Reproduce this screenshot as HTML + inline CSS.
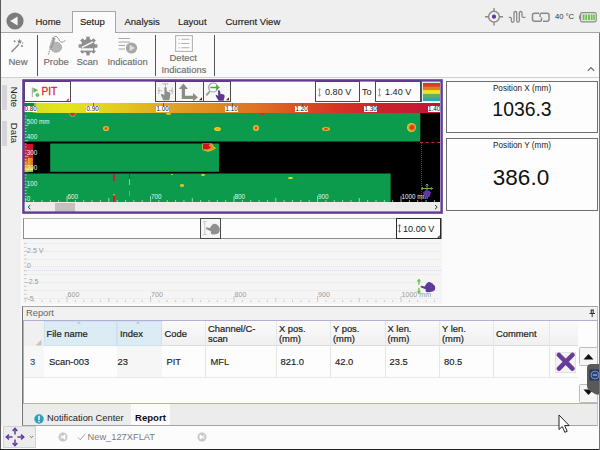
<!DOCTYPE html>
<html>
<head>
<meta charset="utf-8">
<title>Scan Setup</title>
<style>
html,body{margin:0;padding:0;}
body{width:600px;height:450px;position:relative;overflow:hidden;background:#fbfbfb;font-family:"Liberation Sans",sans-serif;font-size:9.5px;color:#222;}
.a{position:absolute;}
.t{position:absolute;white-space:nowrap;line-height:1;}
/* top bar */
#topbar{left:0;top:0;width:600px;height:32px;background:#efefef;border-bottom:1px solid #a6a6a6;}
#setuptab{left:72px;top:11px;width:42px;height:22px;background:#fbfbfb;border:1px solid #a6a6a6;border-bottom:none;}
#toolbar{left:0;top:33px;width:600px;height:44px;background:#fbfbfb;border-bottom:1px solid #cfcfcf;}
.tab{font-size:9.5px;color:#222;top:17px;-webkit-text-stroke:.15px #222;}
.tl{font-size:9.5px;color:#6e6e6e;-webkit-text-stroke:.15px #6e6e6e;}
.sep{width:1px;background:#555;top:35px;height:41px;}
/* scan panel */
#scan{left:23px;top:80px;width:419px;height:133px;background:#fcfcfc;}
.btn{background:#fdfdfd;border:1px solid #4a4a4a;box-sizing:border-box;}
.cl{font-size:6.3px;color:#111;background:#fff;top:105.5px;height:6.5px;line-height:6.5px;padding:0 0.5px;}
.yl,.xl{font-size:6.3px;color:#e8f4ec;}
.gl{font-size:7.1px;color:#9a9a9a;}
.green{background:#0c9a4c;}
.blk{background:#000;}
.vt{font-size:9.9px;color:#222;transform:scaleX(.92);transform-origin:0 0;}
/* value panels */
.vp{background:#fdfdfd;border:1px solid #6e6e6e;box-sizing:border-box;}
/* report */
.hd{font-size:9.4px;color:#1c1c1c;line-height:10px;-webkit-text-stroke:.2px #1c1c1c;}
.cell{font-size:9.4px;color:#1c1c1c;-webkit-text-stroke:.15px #1c1c1c;}
</style>
</head>
<body>
<!-- ===== top tab bar ===== -->
<div class="a" id="topbar"></div>
<div class="a" id="setuptab"></div>
<div class="a" id="toolbar"></div>
<svg class="a" style="left:6px;top:12px" width="18" height="18" viewBox="0 0 18 18"><circle cx="9" cy="9" r="8.6" fill="#7c7c7c"/><path d="M4.2 9 L11.6 4.6 L11.6 13.4 Z" fill="#f4f4f4"/></svg>
<div class="t tab" style="left:35.5px">Home</div>
<div class="t tab" style="left:80px">Setup</div>
<div class="t tab" style="left:124.5px">Analysis</div>
<div class="t tab" style="left:178px">Layout</div>
<div class="t tab" style="left:225.5px">Current View</div>

<!-- status icons top right -->
<svg class="a" style="left:483px;top:6px" width="22" height="22" viewBox="0 0 22 22"><g fill="none" stroke="#8a8a8a" stroke-width="1.4"><circle cx="11" cy="10.7" r="5.4"/><path d="M11 2v4M11 15.5v4M2 10.7h4M16 10.7h4"/></g><circle cx="11" cy="10.7" r="2.1" fill="#5b3a96"/></svg>
<svg class="a" style="left:508px;top:9px" width="18" height="16" viewBox="0 0 18 16"><path d="M0.7 8.3 H2.3 Q3.3 8.3 3.3 9.5 V11.8 Q3.3 13.3 4.7 13.3 Q6 13.3 6 11.8 V4 Q6 2.5 7.3 2.5 Q8.7 2.5 8.700 4 V11.8 Q8.700 13.3 10 13.3 Q11.300 13.3 11.300 11.8 V4 Q11.300 2.5 12.700 2.5 Q14 2.5 14 4 V7 Q14 8.3 15 8.3 H17.5" fill="none" stroke="#8a8a8a" stroke-width="1.3"/></svg>
<svg class="a" style="left:531px;top:11px" width="20" height="13" viewBox="0 0 20 13"><g fill="none" stroke="#8a8a8a" stroke-width="1.5"><path d="M8 2.2 H3.5 Q1.5 2.2 1.5 4.2 V8.2 Q1.5 10.2 3.5 10.2 H9 Q10.5 10.2 10.5 8.7 V6.5"/><path d="M12 10.2 H16 Q18 10.2 18 8.2 V4.2 Q18 2.2 16 2.2 H10.5 Q9 2.2 9 3.7 V6"/></g></svg>
<div class="t" style="left:555px;top:13px;font-size:7.6px;color:#333">40 °C</div>
<svg class="a" style="left:579px;top:12px" width="18" height="11" viewBox="0 0 18 11"><rect x="1.6" y="0.7" width="15.6" height="9.2" rx="1.6" fill="none" stroke="#8a8a8a" stroke-width="1.2"/><rect x="0" y="3.3" width="1.6" height="4" fill="#8a8a8a"/><g fill="#6cc04a"><rect x="3.6" y="2.4" width="1.9" height="5.8"/><rect x="6.3" y="2.4" width="1.9" height="5.8"/><rect x="9" y="2.4" width="1.9" height="5.8"/><rect x="11.7" y="2.4" width="1.9" height="5.8"/><rect x="14.2" y="2.4" width="1.6" height="5.8"/></g></svg>

<!-- ===== toolbar ===== -->
<div class="a sep" style="left:37.400px"></div>
<div class="a sep" style="left:155px"></div>
<div class="a sep" style="left:214px"></div>
<!-- New -->
<svg class="a" style="left:9px;top:37px" width="18" height="18" viewBox="0 0 18 18"><path d="M2.5 15 L10 7.2" stroke="#8c8c8c" stroke-width="1.5" fill="none"/><path d="M10.6 1.8l.8 1.7 1.8.2-1.3 1.3.3 1.8-1.6-.9-1.6.9.3-1.8L8 3.700l1.800-.2z" fill="#8c8c8c"/><circle cx="5.600" cy="4.200" r="1" fill="#8c8c8c"/><circle cx="13" cy="9" r="1.1" fill="#8c8c8c"/><circle cx="13.600" cy="6" r=".7" fill="#8c8c8c"/></svg>
<div class="t tl" style="left:8.5px;top:57px">New</div>
<!-- Probe -->
<svg class="a" style="left:44px;top:35px" width="24" height="22" viewBox="0 0 24 22"><path d="M9.300 3.200 Q10.500 0.300 12.800 1.600 Q14.600 3 15.600 6 Q17.500 8.800 21.500 5.300" fill="none" stroke="#9a9a9a" stroke-width="1"/><ellipse cx="12" cy="12.200" rx="5.600" ry="5" fill="#b6b6b6" stroke="#a2a2a2" stroke-width=".8"/><path d="M10 2.800 L6.600 13" stroke="#9c9c9c" stroke-width="3.200" fill="none"/><path d="M8.600 4 L6 12" stroke="#d4d4d4" stroke-width=".7" fill="none"/><path d="M6.300 13.500 L4.300 19.500" stroke="#a2a2a2" stroke-width="1.400" stroke-dasharray="1.600 .9" fill="none"/></svg>
<div class="t tl" style="left:43.500px;top:57px">Probe</div>
<!-- Scan -->
<svg class="a" style="left:78px;top:36px" width="20" height="20" viewBox="0 0 20 20"><g fill="#8e8e8e"><circle cx="10" cy="10" r="7"/><g transform="rotate(0 10 10)"><rect x="8.300" y="0.600" width="3.400" height="3.500"/><rect x="8.300" y="15.900" width="3.400" height="3.500"/></g><g transform="rotate(45 10 10)"><rect x="8.300" y="0.600" width="3.400" height="3.500"/><rect x="8.300" y="15.900" width="3.400" height="3.500"/></g><g transform="rotate(90 10 10)"><rect x="8.300" y="0.600" width="3.400" height="3.500"/><rect x="8.300" y="15.900" width="3.400" height="3.500"/></g><g transform="rotate(135 10 10)"><rect x="8.300" y="0.600" width="3.400" height="3.500"/><rect x="8.300" y="15.900" width="3.400" height="3.500"/></g></g><path d="M3.900 11.400 L15 5.900" stroke="#fbfbfb" stroke-width="1.500" fill="none"/><rect x="3.900" y="12.300" width="11.100" height="2.300" fill="#fbfbfb"/></svg>
<div class="t tl" style="left:76.500px;top:57px">Scan</div>
<!-- Indication -->
<svg class="a" style="left:117px;top:36px" width="22" height="20" viewBox="0 0 22 20"><g stroke="#a6a6a6" stroke-width="1.200"><path d="M1.500 2.500H13M1.500 6H13M1.500 9.500H8M1.500 13H8"/></g><circle cx="14.500" cy="12" r="5.600" fill="#a6a6a6"/><path d="M12.600 8.800 L18 12 L12.600 15.200 Z" fill="#dedede"/></svg>
<div class="t tl" style="left:107.500px;top:57px;font-size:9.400px">Indication</div>
<!-- Detect Indications -->
<svg class="a" style="left:175px;top:35px" width="18" height="17" viewBox="0 0 18 17"><rect x="0.600" y="0.600" width="16.800" height="15.800" fill="#fdfdfd" stroke="#b4b4b4" stroke-width="1.100"/><g stroke="#b0b0b0" stroke-width="1.100"><path d="M3.500 4.300h1.300M6.300 4.300h8.200M3.500 8.500h1.300M6.300 8.500h8.200M3.500 12.700h1.300M6.300 12.700h8.200"/></g></svg>
<div class="t tl" style="left:169.500px;top:53.400px">Detect</div>
<div class="t tl" style="left:161.500px;top:64.500px;font-size:9.400px">Indications</div>
<svg class="a" style="left:586px;top:65px" width="10" height="8" viewBox="0 0 10 8"><path d="M1.800 5.800 L5 2.600 L8.200 5.800" fill="none" stroke="#666" stroke-width="1.100"/></svg>

<!-- left side tabs -->
<div class="a" style="left:1px;top:78px;width:20px;height:348px;background:#f0f0f0"></div>
<div class="a" style="left:0;top:0;width:1.2px;height:450px;background:#5a5a5a"></div>
<div class="a" style="left:2px;top:85px;width:5px;height:25px;background:#d4d4da"></div>
<div class="a" style="left:2px;top:121px;width:5px;height:25px;background:#d4d4da"></div>
<div class="t" style="left:13.500px;top:97px;font-size:9.600px;color:#222;transform:translate(-50%,-50%) rotate(90deg)">Note</div>
<div class="t" style="left:13.500px;top:133px;font-size:9.600px;color:#222;transform:translate(-50%,-50%) rotate(90deg)">Data</div>

<!-- ===== scan panel ===== -->
<div class="a" id="scan"></div>
<svg class="a" style="left:20px;top:77px;z-index:5" width="426" height="140" viewBox="0 0 426 140"><rect x="3.400" y="3.400" width="418.200" height="132.200" fill="none" stroke="#613a92" stroke-width="2.400"/></svg>
<div class="a btn" style="left:24px;top:81px;width:46.500px;height:21px"></div>
<svg class="a" style="left:30.700px;top:86.500px" width="9" height="11" viewBox="0 0 9 11"><rect x="0.800" y="0.500" width="1" height="9.500" fill="#a2a2a2"/><path d="M2.300 0.800 L7.200 3.300 L2.300 5.800 Z" fill="#64bc48"/><circle cx="6.400" cy="8" r="1.600" fill="#74c458" stroke="#4a9a40" stroke-width=".5"/></svg>
<div class="t" style="left:41.500px;top:86.500px;font-size:10px;color:#d8262e;-webkit-text-stroke:.3px #d8262e">PIT</div>
<svg class="a" style="left:64.500px;top:96.500px" width="4" height="4" viewBox="0 0 4 4"><path d="M3.700 1.200V3.700H1.200Z" fill="#d0102a"/></svg>

<div class="a btn" style="left:155px;top:81px;width:21px;height:21px;background:#f4f4f4"></div>
<div class="a btn" style="left:175px;top:81px;width:29px;height:21px;background:#f8f8f8"></div>
<div class="a btn" style="left:203px;top:81px;width:27.500px;height:21px;background:#f8f8f8"></div>
<!-- hand w/ arrows icon -->
<svg class="a" style="left:156px;top:82px" width="19" height="19" viewBox="0 0 19 19"><g stroke="#9a9a9a" stroke-width=".9" fill="none"><path d="M6.500 1.800h6M9.500 1.800v3.500" stroke-dasharray="1 .5"/><path d="M2.800 5.500v6.500M16.200 5.500v6.500M2.800 8.700h3M13.200 8.700h3" stroke-dasharray="1.200 .5"/></g><path d="M8.400 5.600 Q9.500 4.600 10.600 5.600 V9.300 L13.300 10.200 Q14.500 10.800 14.300 12.300 L13.400 18.300 H7.300 L4.900 13 Q4.700 11.800 6.100 11.900 L8.400 13 Z" fill="#8e8e8e"/></svg>
<!-- axis arrows -->
<svg class="a" style="left:177px;top:82px" width="26" height="19" viewBox="0 0 26 19"><path d="M6.400 17 V6 M6.400 15.400 H17" stroke="#8a8a8a" stroke-width="3.200" fill="none"/><path d="M6.400 1.600 L11 7 H1.800 Z" fill="#8a8a8a"/><path d="M21 15.400 L16 11 V19 Z" fill="#8a8a8a"/><path d="M25 15.300 V18.300 H22 Z" fill="#333"/></svg>
<!-- zoom icon -->
<svg class="a" style="left:204px;top:82px" width="26" height="19" viewBox="0 0 26 19"><circle cx="9.200" cy="5.500" r="4.500" fill="#fff" stroke="#9a9a9a" stroke-width="1.200"/><path d="M5.800 9.300 L2.300 13.300" stroke="#9a9a9a" stroke-width="1.800"/><path d="M6.300 5.500 H13 M12 3.400 L14.800 5.500 L12 7.600" stroke="#4aa83c" stroke-width="1.300" fill="none"/><path d="M14 8.600 Q15 7.800 15.900 8.800 L16.400 11.700 L19.800 12.600 Q21 13.300 20.600 14.700 L19.600 18.700 H14.600 L11.600 13.800 Q11.600 12.700 12.900 13 L14.200 13.900 Z" fill="#5e3596"/><path d="M25 15.300 V18.300 H22 Z" fill="#333"/></svg>

<div class="a btn" style="left:315px;top:81px;width:45px;height:21px"></div>
<div class="a btn" style="left:375px;top:81px;width:45.500px;height:21px"></div>
<svg class="a" style="left:316.5px;top:87.5px" width="5" height="9" viewBox="0 0 5 9"><path d="M2.500 0.800V8.200M1.200 2.300L2.500 0.700L3.800 2.300M1.200 6.700L2.500 8.300L3.800 6.700" stroke="#8a8a8a" stroke-width=".8" fill="none"/></svg>
<svg class="a" style="left:376.5px;top:87.5px" width="5" height="9" viewBox="0 0 5 9"><path d="M2.500 0.800V8.200M1.200 2.300L2.500 0.700L3.800 2.300M1.200 6.700L2.500 8.300L3.800 6.700" stroke="#8a8a8a" stroke-width=".8" fill="none"/></svg>
<div class="t vt" style="left:324.500px;top:86.500px">0.80 V</div>
<div class="t vt" style="left:384.500px;top:86.500px">1.40 V</div>
<div class="t vt" style="left:361.500px;top:86.500px">To</div>
<!-- palette icon -->
<div class="a" style="left:421px;top:81px;width:19px;height:21px;background:#e8e8e8;border-left:1px solid #555;box-sizing:border-box"></div>
<div class="a" style="left:422.500px;top:82.500px;width:17px;height:18.500px;background:linear-gradient(#d83a28 0,#d8402a 18%,#e07a22 22%,#e08024 38%,#e6e628 42%,#e6e628 58%,#5cb84a 62%,#5cb84a 78%,#3aa0c0 82%,#3aa0c0 100%)"></div>

<!-- colour bar -->
<div class="a" style="left:24px;top:102.500px;width:416px;height:10.500px;background:linear-gradient(90deg,#18a048 0,#20a848 1.800%,#d8e020 3.200%,#e4e41c 10%,#e2da1e 17%,#e2c41e 25%,#e0a822 33.500%,#e08a22 46%,#de6c22 58%,#da4c22 67%,#d43426 76%,#cc242c 85%,#c01438 100%)"></div>
<div class="a" style="left:24px;top:102.500px;width:10px;height:3px;background:#0c8a40"></div>
<div class="a" style="left:93px;top:102.500px;width:1px;height:3px;background:#5a5030;opacity:.8"></div><div class="a" style="left:162.5px;top:102.500px;width:1px;height:3px;background:#5a5030;opacity:.8"></div><div class="a" style="left:232px;top:102.500px;width:1px;height:3px;background:#5a5030;opacity:.8"></div><div class="a" style="left:301.5px;top:102.500px;width:1px;height:3px;background:#5a5030;opacity:.8"></div><div class="a" style="left:371px;top:102.500px;width:1px;height:3px;background:#5a5030;opacity:.8"></div>
<div class="t cl" style="left:24px">0.80</div>
<div class="t cl" style="left:86px">0.90</div>
<div class="t cl" style="left:156px">1.00</div>
<div class="t cl" style="left:225px">1.10</div>
<div class="t cl" style="left:295px">1.20</div>
<div class="t cl" style="left:364px">1.30</div>
<div class="t cl" style="left:427.500px">1.40</div>

<!-- image area -->
<svg class="a" style="left:24px;top:113px" width="416" height="89" viewBox="0 0 416 89"><rect width="416" height="89" fill="#000"/><g fill="#0c9a4c"><rect x="0" y="0" width="396.300" height="28.500"/><rect x="26.200" y="30.500" width="168.800" height="28.300"/><rect x="0" y="60.500" width="366.600" height="28.500"/></g></svg>
<!-- left colour strip -->
<div class="a" style="left:24px;top:143.500px;width:8.500px;height:28.300px;background:linear-gradient(#c8102c 0,#cc1c2c 45%,#e06020 60%,#e8a020 78%,#e8e020 92%,#60b040 100%)"></div>
<div class="a" style="left:28px;top:158px;width:4.500px;height:9px;background:linear-gradient(90deg,#e8b020,#e06a20)"></div>
<!-- blobs band1 -->
<div class="a" style="left:69.500px;top:113px;width:5px;height:2.500px;border-radius:0 0 3px 3px;background:#d8282a;box-shadow:0 0 0 .6px #c8c828"></div>
<div class="a" style="left:102.500px;top:126px;width:6.500px;height:5px;border-radius:50%;background:radial-gradient(#e05020 20%,#e8b820 50%,#b0cc34 78%,rgba(120,190,60,0) 100%)"></div>
<div class="a" style="left:166px;top:113px;width:5px;height:1.500px;background:#d8c828;border-radius:0 0 3px 3px"></div>
<div class="a" style="left:214px;top:126.500px;width:6.500px;height:4px;border-radius:50%;background:radial-gradient(#e8b020 25%,#e0d828 60%,rgba(150,200,60,0) 100%)"></div>
<div class="a" style="left:252.500px;top:125px;width:6.500px;height:5.500px;border-radius:50%;background:radial-gradient(#e05820 20%,#e8b820 50%,#b0cc34 78%,rgba(120,190,60,0) 100%)"></div>
<div class="a" style="left:259.500px;top:113px;width:5px;height:1.800px;background:#d03028;border-radius:0 0 3px 3px"></div>
<div class="a" style="left:321.500px;top:127px;width:8.500px;height:4px;border-radius:50%;background:radial-gradient(#e04820 20%,#e8b020 50%,#c0d030 78%,rgba(120,190,60,0) 100%)"></div>
<div class="a" style="left:406.500px;top:122.500px;width:9px;height:9px;border-radius:50%;background:radial-gradient(circle at 55% 50%,#d8382a 25%,#e89020 45%,#e0d828 70%,#90c840 90%,rgba(120,190,60,0) 100%)"></div>
<!-- blob band2 -->
<svg class="a" style="left:201px;top:143px" width="16" height="10" viewBox="0 0 16 10"><path d="M1.300 0.500 H11 L12.500 3 L15 5.300 L11 7.500 L7 8.700 L3 7.500 L1.300 6.500 Z" fill="#d8d028"/><path d="M1.800 0.500 H10.500 L11.800 3.200 L13.800 5.300 L10.500 6.800 L7 7.800 L3.500 6.800 L1.800 6 Z" fill="#e88a20"/><path d="M2 0.500 H9.500 L7.500 2.600 L9.800 4.500 L7 6.300 L2 6.300 Z" fill="#cc1430"/></svg>
<!-- blobs band3 -->
<div class="a" style="left:112.500px;top:174px;width:2px;height:6.500px;background:#d8182c"></div>
<div class="a" style="left:112.500px;top:194px;width:2px;height:8px;background:linear-gradient(#e8c020,#d8182c 30%)"></div>
<div class="a" style="left:128.500px;top:173.500px;width:1px;height:5px;background:#604020"></div>
<div class="a" style="left:128.500px;top:178.500px;width:1px;height:6px;background:#b8c830"></div>
<div class="a" style="left:128.500px;top:191px;width:1px;height:5px;background:#6cb840"></div>
<div class="a" style="left:170.500px;top:173.500px;width:2px;height:1px;background:#c8c030"></div>
<div class="a" style="left:200.500px;top:173.500px;width:4px;height:2px;border-radius:50%;background:#d8d428"></div>
<div class="a" style="left:179.500px;top:184px;width:4.500px;height:2.800px;border-radius:50%;background:radial-gradient(#e8b820 30%,#d0d830 90%)"></div>
<div class="a" style="left:288px;top:177px;width:4.500px;height:2.200px;border-radius:50%;background:#d8d830"></div>
<!-- cursor dashed lines -->
<div class="a" style="left:420px;top:141.500px;width:20px;height:0;border-top:1px dashed #c83020"></div>
<div class="a" style="left:420.500px;top:142px;width:0;height:60px;border-left:1px dotted #a02818"></div>
<!-- axis labels in image -->
<div class="t yl" style="left:26.8px;top:118.8px">500 mm</div>
<div class="t yl" style="left:26.8px;top:134.3px">400</div>
<div class="t yl" style="left:26.8px;top:149.7px">300</div>
<div class="t yl" style="left:26.8px;top:165.1px">200</div>
<div class="t yl" style="left:26.8px;top:180.6px">100</div>
<div class="t yl" style="left:26.8px;top:196.1px">0</div>
<div class="t xl" style="left:67.500px;top:194.1px">600</div>
<div class="t xl" style="left:151px;top:194.1px">700</div>
<div class="t xl" style="left:234.500px;top:194.1px">800</div>
<div class="t xl" style="left:318px;top:194.1px">900</div>
<div class="t xl" style="left:401.500px;top:194.1px">1000 mm</div>
<!-- ticks -->
<svg class="a" style="left:24px;top:113px" width="416" height="89" viewBox="0 0 416 89"><g stroke="#dff0e4" stroke-width=".8" id="ticks"></g>
<path d="M0 88.500H416" stroke="none"/>
<g stroke="#d8ecde" stroke-width=".7">
<path d="M0.500 3h2M0.500 6.100h2M0.500 9.200h2M0.500 12.300h4M0.500 15.400h2M0.500 18.500h2M0.500 21.600h2M0.500 24.700h2M0.500 27.800h4M0.500 30.900h2M0.500 34h2M0.500 37.100h2M0.500 40.200h2M0.500 43.300h4M0.500 46.400h2M0.500 49.500h2M0.500 52.600h2M0.500 55.700h2M0.500 58.800h4M0.500 61.900h2M0.500 65h2M0.500 68.100h2M0.500 71.200h2M0.500 74.300h4M0.500 77.400h2M0.500 80.500h2M0.500 83.600h2M0.500 86.700h2"/>
<path d="M1.300 89v-4M9.650 89v-2M18 89v-2M26.350 89v-2M34.700 89v-2M43 89v-6M51.400 89v-2M59.750 89v-2M68.100 89v-2M76.450 89v-2M84.800 89v-4M93.150 89v-2M101.500 89v-2M109.850 89v-2M118.200 89v-2M126.550 89v-6M134.900 89v-2M143.250 89v-2M151.600 89v-2M159.950 89v-2M168.300 89v-4M176.650 89v-2M185 89v-2M193.350 89v-2M201.700 89v-2M210 89v-6M218.400 89v-2M226.750 89v-2M235.100 89v-2M243.450 89v-2M251.800 89v-4M260.150 89v-2M268.500 89v-2M276.850 89v-2M285.200 89v-2M293.550 89v-6M301.900 89v-2M310.250 89v-2M318.600 89v-2M326.950 89v-2M335.300 89v-4M343.650 89v-2M352 89v-2M360.350 89v-2M368.700 89v-2M377 89v-6M385.400 89v-2M393.750 89v-2M402.100 89v-2M410.450 89v-2"/>
</g></svg>
<!-- pentagon cursor icon -->
<svg class="a" style="left:418px;top:182px" width="18" height="18" viewBox="0 0 18 18"><g stroke="#78c040" stroke-width=".9" fill="none"><path d="M9 2v6M3.500 6.500h11M9 2l-1.300 1.500M9 2l1.300 1.500M3.500 6.500l1.400-1.200M3.500 6.500l1.400 1.200M14.500 6.500l-1.400-1.200M14.500 6.500l-1.400 1.200"/></g><path d="M9 7.500 L13 10.300 L11.600 15 H6.400 L5 10.300 Z" fill="#62389c"/></svg>
<!-- scrollbar -->
<div class="a" style="left:24px;top:202px;width:416px;height:10px;background:#ececec"></div>
<div class="a" style="left:55px;top:203px;width:19.500px;height:8.500px;background:#c2c2c2"></div>
<svg class="a" style="left:24px;top:202px" width="416" height="10" viewBox="0 0 416 10"><path d="M6.400 3 L4.200 5.100 L6.400 7.200M411 3 L413.200 5.100 L411 7.200" stroke="#333" stroke-width="1" fill="none"/></svg>

<!-- ===== value panels ===== -->
<div class="a vp" style="left:446px;top:81px;width:152px;height:52px"></div>
<div class="a vp" style="left:446px;top:138px;width:152px;height:73px"></div>
<div class="t" style="left:522px;top:84.500px;font-size:8.200px;color:#222;transform:translateX(-50%)">Position X (mm)</div>
<div class="t" style="left:522px;top:141.500px;font-size:8.200px;color:#222;transform:translateX(-50%)">Position Y (mm)</div>
<div class="t" style="left:522px;top:98.500px;font-size:20.500px;color:#111;transform:translateX(-50%) scaleX(.945)">1036.3</div>
<div class="t" style="left:521px;top:167px;font-size:22.500px;color:#111;transform:translateX(-50%)">386.0</div>

<!-- ===== strip chart panel ===== -->
<div class="a" style="left:23px;top:239px;width:419px;height:65px;background:#f5f5f5"></div>
<div class="a" style="left:23px;top:217.500px;width:419px;height:21.500px;background:#fdfdfd;border:1px solid #8e8e8e;border-top-color:#b4b4b4;box-sizing:border-box"></div>
<div class="a btn" style="left:200px;top:217.500px;width:20.500px;height:21px;background:#f6f6f6"></div>
<svg class="a" style="left:201px;top:219px" width="19" height="18" viewBox="0 0 19 18"><path d="M2 2.500h3.600M2 15.500h3.600M3.800 2.500v13" stroke="#c4c4c4" stroke-width=".9" fill="none"/><path d="M5 8.800 Q5.400 8 6.400 8.400 L9 9.100 Q10.800 5.200 12.800 4.700 Q14.800 4.500 16.600 6 Q18.800 7.800 18.800 10.300 Q18.800 13.300 17 14.500 Q13.500 15.700 10.800 15.300 Q9.600 15 9.900 13.700 L10.300 12.600 L5.600 10.300 Q4.700 9.700 5 8.800 Z" fill="#909090"/></svg>
<div class="a btn" style="left:395.500px;top:217.500px;width:45.500px;height:21.500px;background:#fdfdfd;border-color:#2a2a2a"></div>
<svg class="a" style="left:397px;top:224px" width="5" height="9" viewBox="0 0 5 9"><path d="M2.500 0.800V8.200M1.200 2.300L2.500 0.700L3.800 2.300M1.200 6.700L2.500 8.300L3.800 6.700" stroke="#555" stroke-width=".8" fill="none"/></svg>
<div class="t vt" style="left:402.500px;top:223.500px">10.00 V</div>
<svg class="a" style="left:435.500px;top:233.500px" width="4" height="4" viewBox="0 0 4 4"><path d="M3.700 1.200V3.700H1.200Z" fill="#222"/></svg>
<!-- grid lines -->
<div class="a" style="left:24px;top:243px;width:417px;height:58px;background:repeating-linear-gradient(#ededed 0,#ededed 1px,transparent 1px,transparent 7.800px)"></div>
<div class="a" style="left:24px;top:270px;width:417px;height:0;border-top:1px dotted #ddd5f0"></div>
<div class="t gl" style="left:27px;top:248.2px">2.5 V</div>
<div class="t gl" style="left:27px;top:263.2px">0</div>
<div class="t gl" style="left:26.3px;top:279.2px">-2.5</div>
<div class="t gl" style="left:27.500px;top:296px">-5</div>
<div class="t gl" style="left:67.500px;top:292px">600</div>
<div class="t gl" style="left:151px;top:292px">700</div>
<div class="t gl" style="left:234.500px;top:292px">800</div>
<div class="t gl" style="left:318px;top:292px">900</div>
<div class="t gl" style="left:401.500px;top:292px">1000 mm</div>
<svg class="a" style="left:24px;top:240px" width="416" height="63" viewBox="0 0 416 63"><g stroke="#b8b8b8" stroke-width=".7">
<path d="M0 3.500h2.500M0 7.400h2.500M0 11.300h4M0 15.200h2.500M0 19.100h2.500M0 23h2.500M0 26.900h4M0 30.800h2.500M0 34.700h2.500M0 38.600h2.500M0 42.500h4M0 46.400h2.500M0 50.300h2.500M0 54.200h2.500M0 58.100h4"/>
<path d="M1.300 62v-4M9.650 62v-2M18 62v-2M26.350 62v-2M34.700 62v-2M43 62v-6M51.400 62v-2M59.750 62v-2M68.100 62v-2M76.450 62v-2M84.800 62v-4M93.150 62v-2M101.500 62v-2M109.850 62v-2M118.200 62v-2M126.550 62v-6M134.900 62v-2M143.250 62v-2M151.600 62v-2M159.950 62v-2M168.300 62v-4M176.650 62v-2M185 62v-2M193.350 62v-2M201.700 62v-2M210 62v-6M218.400 62v-2M226.750 62v-2M235.100 62v-2M243.450 62v-2M251.800 62v-4M260.150 62v-2M268.500 62v-2M276.850 62v-2M285.200 62v-2M293.550 62v-6M301.900 62v-2M310.250 62v-2M318.600 62v-2M326.950 62v-2M335.300 62v-4M343.650 62v-2M352 62v-2M360.350 62v-2M368.700 62v-2M377 62v-6M385.400 62v-2M393.750 62v-2M402.100 62v-2M410.450 62v-2"/>
</g></svg>
<!-- hand icon w/ green arrows -->
<svg class="a" style="left:416px;top:277px" width="22" height="19" viewBox="0 0 22 19"><g fill="#6cc044" stroke="#6cc044" stroke-width=".5"><path d="M2.900 1.800 L4.600 4.300 H1.200 Z M2.900 16.900 L4.600 14.400 H1.200 Z"/><path d="M2.500 4.300 H3.300 V7.400 H2.500 Z M2.500 11 H3.300 V14.400 H2.500 Z"/></g><path d="M4.600 9.200 Q5 8.500 6 8.900 L8.600 9.600 Q10.500 5.600 12.600 5 Q14.500 4.800 16.500 6.500 Q19.300 8.700 19.300 11 Q19.300 13.300 17.300 14.300 Q13.500 15.400 10.500 15.100 Q9.300 14.800 9.600 13.600 L10 12.600 L5.200 10.600 Q4.300 10.100 4.600 9.200 Z" fill="#5c3a98"/><circle cx="15.500" cy="10.500" r=".5" fill="#c04040"/></svg>

<!-- ===== report panel ===== -->
<div class="a" style="left:22px;top:306px;width:576px;height:120px;background:#ececec;border:1px solid #a4a4a4;border-left-color:#707070;border-right-color:#c4c4c4;box-sizing:border-box"></div>
<div class="a" style="left:23px;top:307px;width:574px;height:13px;background:#f1f1f1"></div>
<div class="t" style="left:26px;top:308.500px;font-size:9.300px;color:#666">Report</div>
<svg class="a" style="left:588px;top:309px" width="8" height="9" viewBox="0 0 8 9"><path d="M2.500 1h3.500M3.300 1v3.200M5.200 1v3.200M1.500 4.500h5.500M4.200 4.500v3.500" stroke="#333" stroke-width="1" fill="none"/></svg>
<div class="a" style="left:23px;top:320px;width:574.500px;height:83.500px;background:#fdfdfd;border:1px solid #b4aed4;box-sizing:border-box"></div>
<!-- header row -->
<div class="a" style="left:24px;top:321px;width:554px;height:25px;background:linear-gradient(#fafafa,#f0f0f0);border-bottom:1px solid #dcdcdc;box-sizing:border-box"></div>
<div class="a" style="left:24px;top:321px;width:19.500px;height:56px;background:#f0f0f0"></div>
<div class="a" style="left:24px;top:346px;width:19.500px;height:31px;background:#f7f7f7"></div>
<div class="a" style="left:43.500px;top:320.500px;width:73.500px;height:25.500px;background:#dcecf4;border:1px solid #cde2ee;box-sizing:border-box"></div>
<div class="a" style="left:117px;top:320.500px;width:44.500px;height:25.500px;background:#dcecf4;border:1px solid #cde2ee;box-sizing:border-box"></div>
<div class="a" style="left:117px;top:346px;width:44.500px;height:31px;background:#f6f6f6"></div>
<div class="a" style="left:24px;top:377px;width:554px;height:1px;background:#e8e8e8"></div>
<!-- column separators -->
<div class="a" style="left:205px;top:321px;width:1px;height:56px;background:#e6e6e6"></div>
<div class="a" style="left:275.500px;top:321px;width:1px;height:56px;background:#e6e6e6"></div>
<div class="a" style="left:329.500px;top:321px;width:1px;height:56px;background:#e6e6e6"></div>
<div class="a" style="left:384.500px;top:321px;width:1px;height:56px;background:#e6e6e6"></div>
<div class="a" style="left:438.500px;top:321px;width:1px;height:56px;background:#e6e6e6"></div>
<div class="a" style="left:493px;top:321px;width:1px;height:56px;background:#e6e6e6"></div>
<div class="a" style="left:549px;top:321px;width:1px;height:56px;background:#e6e6e6"></div>
<svg class="a" style="left:35px;top:339px" width="7" height="7" viewBox="0 0 7 7"><path d="M6.500 0.500V6.500H0.500Z" fill="#c4c4c4"/></svg>
<svg class="a" style="left:75px;top:321px" width="8" height="3" viewBox="0 0 8 3"><path d="M2 2.500 L4 0.800 L6 2.500Z" fill="#9cc4d8"/></svg>
<svg class="a" style="left:134px;top:321px" width="8" height="3" viewBox="0 0 8 3"><path d="M2 2.500 L4 0.800 L6 2.500Z" fill="#9cc4d8"/></svg>
<div class="t hd" style="left:46.500px;top:329px">File name</div>
<div class="t hd" style="left:120px;top:329px">Index</div>
<div class="t hd" style="left:164.500px;top:329px">Code</div>
<div class="t hd" style="left:208px;top:323.500px">Channel/C-<br>scan</div>
<div class="t hd" style="left:279px;top:323.500px">X pos.<br>(mm)</div>
<div class="t hd" style="left:333px;top:323.500px">Y pos.<br>(mm)</div>
<div class="t hd" style="left:387.500px;top:323.500px">X len.<br>(mm)</div>
<div class="t hd" style="left:442px;top:323.500px">Y len.<br>(mm)</div>
<div class="t hd" style="left:496px;top:329px">Comment</div>
<!-- data row -->
<div class="t cell" style="left:30px;top:357px;color:#2a6c9c">3</div>
<div class="t cell" style="left:49px;top:357px">Scan-003</div>
<div class="t cell" style="left:117.500px;top:357px">23</div>
<div class="t cell" style="left:166.500px;top:357px">PIT</div>
<div class="t cell" style="left:210.500px;top:357px">MFL</div>
<div class="t cell" style="left:280.500px;top:357px">821.0</div>
<div class="t cell" style="left:335px;top:357px">42.0</div>
<div class="t cell" style="left:389.500px;top:357px">23.5</div>
<div class="t cell" style="left:444px;top:357px">80.5</div>
<!-- delete X -->
<div class="a" style="left:555px;top:351.500px;width:21px;height:21px;background:#f3f3f3;border:1px solid #e0e0e0;box-sizing:border-box"></div>
<svg class="a" style="left:556px;top:352px" width="19" height="19" viewBox="0 0 19 19"><path d="M3 3 L16.400 16.600 M16.400 3 L3 16.600" stroke="#673b98" stroke-width="4.600" stroke-linecap="round"/></svg>
<!-- up/down -->
<div class="a" style="left:579px;top:347px;width:19px;height:19px;background:#f6f6f6;border:1px solid #bcbcbc;border-radius:1.500px;box-sizing:border-box"></div>
<div class="a" style="left:579px;top:384px;width:19px;height:18.500px;background:#f6f6f6;border:1px solid #bcbcbc;border-radius:1.500px;box-sizing:border-box"></div>
<svg class="a" style="left:583px;top:353px" width="11" height="7" viewBox="0 0 11 7"><path d="M0.500 6.500 L5.500 1 L10.500 6.500Z" fill="#111"/></svg>
<svg class="a" style="left:583px;top:389px" width="11" height="7" viewBox="0 0 11 7"><path d="M0.500 0.500 L5.500 6 L10.500 0.500Z" fill="#111"/></svg>
<!-- side dark tab -->
<svg class="a" style="left:586px;top:364px" width="14" height="31" viewBox="0 0 14 31"><path d="M14 0 H4.500 Q1 0.500 1 4 V22 Q1 25 4 27 L10 30.500 H14 Z" fill="#595959"/><rect x="3.500" y="5.500" width="10.500" height="11" fill="#27375c"/><circle cx="9" cy="11" r="4" fill="#2c4474" stroke="#7c9ccc" stroke-width=".9"/><path d="M6.800 11h4.400" stroke="#9cbce8" stroke-width="1.200"/></svg>

<!-- bottom tabs -->
<div class="a" style="left:130.500px;top:404px;width:39px;height:21px;background:#fbfbfb"></div>
<svg class="a" style="left:33.7px;top:413.700px" width="10" height="10" viewBox="0 0 10 10"><circle cx="5" cy="5" r="4.700" fill="#2f9fc0"/><rect x="4.300" y="1.800" width="1.400" height="4.200" fill="#fff"/><rect x="4.300" y="6.800" width="1.400" height="1.400" fill="#fff"/></svg>
<div class="t" style="left:47px;top:413.500px;font-size:9.300px;color:#222">Notification Center</div>
<div class="t" style="left:135px;top:413px;font-size:9.600px;color:#111;font-weight:bold">Report</div>

<!-- status bar -->
<div class="a" style="left:1.500px;top:426px;width:598.500px;height:22.500px;background:#fcfcfc"></div>
<div class="a" style="left:2.500px;top:426px;width:33.500px;height:22px;background:#ececec;border:1px solid #d2d2d2;box-sizing:border-box"></div>
<svg class="a" style="left:5px;top:427px" width="20" height="20" viewBox="0 0 20 20"><g stroke="#62389c" stroke-width="1.500" fill="none"><path d="M10 1.500v6M10 12.500v6M1.500 10h6M12.500 10h6"/><path d="M7.600 4 L10 1.300 L12.400 4M7.600 16 L10 18.700 L12.400 16M4 7.600 L1.300 10 L4 12.400M16 7.600 L18.700 10 L16 12.400"/></g></svg>
<svg class="a" style="left:28px;top:434px" width="7" height="6" viewBox="0 0 7 6"><path d="M1.800 2 L3.500 3.700 L5.200 2" stroke="#6a6a6a" stroke-width=".9" fill="none"/></svg>
<svg class="a" style="left:58px;top:432px" width="10" height="10" viewBox="0 0 10 10"><circle cx="5" cy="5" r="4.500" fill="#c6c6c6"/><path d="M3.200 2.800v4.400M7 2.800 L4 5 L7 7.200Z" stroke="#fff" stroke-width=".9" fill="#fff"/></svg>
<svg class="a" style="left:197px;top:432px" width="10" height="10" viewBox="0 0 10 10"><circle cx="5" cy="5" r="4.500" fill="#c6c6c6"/><path d="M6.800 2.800v4.400M3 2.800 L6 5 L3 7.200Z" stroke="#fff" stroke-width=".9" fill="#fff"/></svg>
<svg class="a" style="left:77px;top:433px" width="9" height="8" viewBox="0 0 9 8"><path d="M1 4.500 L3.300 6.800 L8 1.200" stroke="#999" stroke-width=".9" fill="none"/></svg>
<div class="t" style="left:87.500px;top:432.500px;font-size:9.300px;color:#7a7a7a">New_127XFLAT</div>
<div class="a" style="left:0;top:448.500px;width:600px;height:1.500px;background:#222"></div>
<div class="a" style="left:599px;top:33px;width:1px;height:417px;background:#777"></div>
<!-- mouse cursor -->
<svg class="a" style="left:558px;top:414px" width="13" height="20" viewBox="0 0 13 20"><path d="M1 1 V15.500 L4.300 12.500 L6.800 18.300 L9.200 17.300 L6.700 11.600 H11.200 Z" fill="#fff" stroke="#222" stroke-width="1"/></svg>
</body>
</html>
